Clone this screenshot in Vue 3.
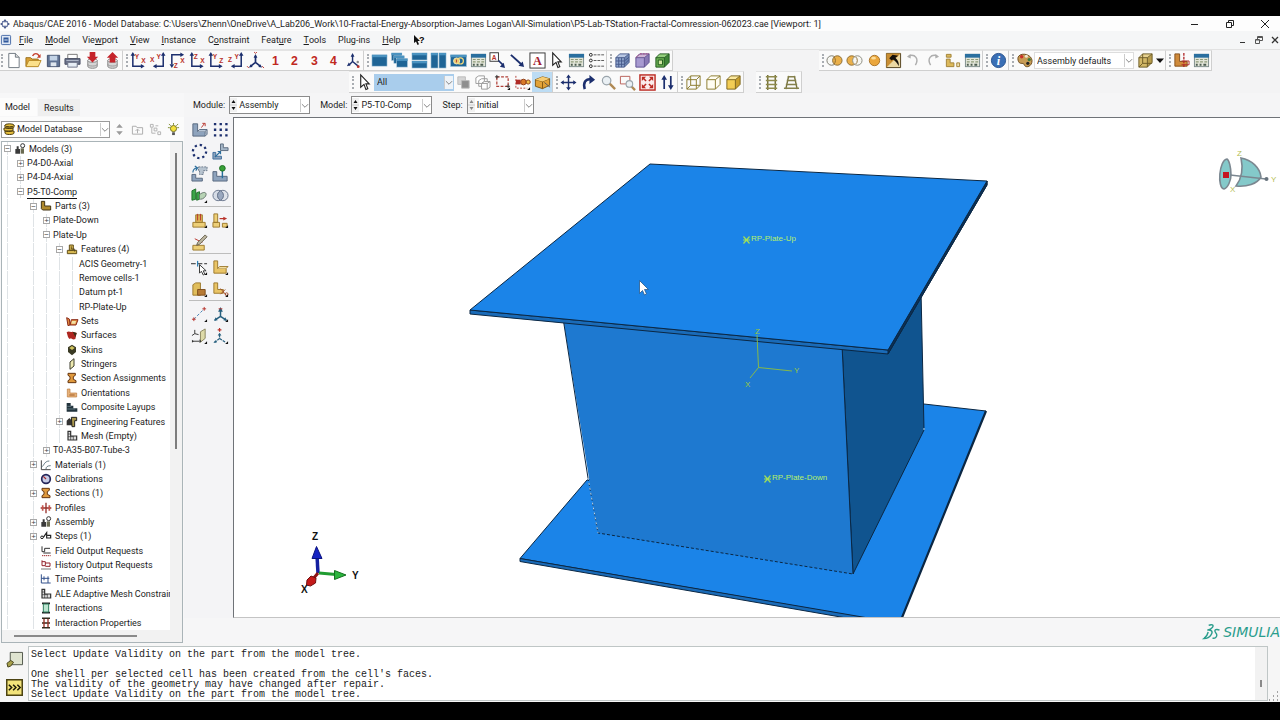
<script setup>
import { ref } from 'vue'

const navy = '#1c2f6e'
const letter = (x, y, t, c = '#b8322a') =>
  `<text x="${x}" y="${y}" font-size="7" font-weight="700" font-family="Liberation Sans, sans-serif" fill="${c}">${t}</text>`
const plane = (kind, a, b) => {
  if (kind === 'left')
    return `<path d="M3 3v12h10" fill="none" stroke="${navy}" stroke-width="1.6"/><path d="M3 0L.6 4h4.8zM15.500 15l-4-2.400v4.800z" fill="${navy}"/>${letter(5, 7, a)}${letter(12, 12, b)}`
  if (kind === 'right')
    return `<path d="M14 3v12H6" fill="none" stroke="${navy}" stroke-width="1.600"/><path d="M14 0l-2.400 4h4.800zM3 15l4-2.400v4.800z" fill="${navy}"/>${letter(7, 7, a)}${letter(0, 11, b)}`
  return `<path d="M3 13V3h10" fill="none" stroke="${navy}" stroke-width="1.600"/><path d="M3 17L.6 13h4.800zM16 3l-4-2.400v4.800z" fill="${navy}"/>${letter(5, 17, a)}${letter(12, 12, b)}`
}
const num = (n) =>
  `<text x="9" y="14" text-anchor="middle" font-size="13" font-weight="700" font-family="Liberation Sans, sans-serif" fill="#c0281e">${n}</text>`
const table =
  '<rect x="1.500" y="2.500" width="15" height="13" fill="#e3e6da" stroke="#7c8c8a"/><path d="M1 2h16v4H1z" fill="#2a6f9f"/><path d="M3 8h3M7.500 8h3M12 8h3M3 10.500h3M7.500 10.500h3M12 10.500h3" stroke="#8e9a78" stroke-width="1.200"/><path d="M3 13.500h2M7 13.500h2M11 13.500h3" stroke="#4c5c50" stroke-width="2"/>'
const cube = (f, t, s, l) =>
  `<path d="M2 6h9v10H2z" fill="${f}"/><path d="M2 6l4-4h10l-5 4z" fill="${t}"/><path d="M11 6l5-4v9l-5 5z" fill="${s}"/><path d="M2 6h9v10H2zM2 6l4-4h10l-5 4M16 2v9l-5 5" fill="none" stroke="${l}"/>`
const wedge = '<path d="M17 14v3h-3z" fill="#111"/>'
const partL = (f, s) => `<path d="M2 2h5v8h8v5H2z" fill="${f}" stroke="${s}"/>`
const screen = (x, y, w, h) =>
  `<rect x="${x}" y="${y}" width="${w}" height="${h}" fill="#1f6596" stroke="#b9d2e2" stroke-width=".6"/><path d="M${x} ${y}h${w}v2.500h-${w}z" fill="#4b93c0"/>`

const icons = {
  new: '<path d="M4 1.500h7l4 4v11H4z" fill="#fff" stroke="#6f7780"/><path d="M11 1.500v4h4" fill="#ddd" stroke="#6f7780"/>',
  open: '<path d="M1 6h5l1.500 1.500H14V15H1z" fill="#d9a035" stroke="#99701c"/><path d="M1 15.500L4 9h13l-3 6.500z" fill="#fbe08a" stroke="#b98b28"/><path d="M8 4c2-3 5-3 7 0" fill="none" stroke="#c43c2a" stroke-width="1.500"/><path d="M16.500 2v4h-4z" fill="#c43c2a"/>',
  save: '<path d="M2.500 3.500h13v12h-13z" fill="#5f7293" stroke="#42506c"/><path d="M5 4h8v5H5z" fill="#c3d3e6"/><path d="M6 11h6v4H6z" fill="#dfe6ee"/>',
  print: '<path d="M4 2.500h10V7H4z" fill="#fff" stroke="#777"/><path d="M1 7h16v6H1z" fill="#6a7189" stroke="#484e63"/><path d="M4 11h10v5H4z" fill="#e6edf5" stroke="#6d7488"/><path d="M2.500 9h13" stroke="#b3bacb"/>',
  dbdown: '<path d="M4 9v6c0 3 10 3 10 0V9z" fill="#d5d5d5" stroke="#888"/><ellipse cx="9" cy="9" rx="5" ry="2" fill="#f2f2f2" stroke="#888"/><path d="M6 0h6v5h3l-6 6-6-6h3z" fill="#c5242b"/><path d="M4 13c0 2.500 10 2.500 10 0" fill="none" stroke="#999"/>',
  dbup: '<path d="M4 9v6c0 3 10 3 10 0V9z" fill="#d5d5d5" stroke="#888"/><ellipse cx="9" cy="9" rx="5" ry="2" fill="#f2f2f2" stroke="#888"/><path d="M6 11h6V6h3L9 0 3 6h3z" fill="#c5242b"/><path d="M4 13c0 2.500 10 2.500 10 0" fill="none" stroke="#999"/>',
  xy: plane('left', 'Y', 'X'),
  yx: plane('right', 'Y', 'X'),
  zx: plane('down', 'Z', 'X'),
  xz: plane('left', 'Z', 'X'),
  yz: plane('left', 'Y', 'Z'),
  zy: plane('right', 'Y', 'Z'),
  iso: `<path d="M9 4v7L4 15M9 11l5 4" fill="none" stroke="${navy}" stroke-width="1.800"/><path d="M9 2L7 6h4zM2 16.500l4-.5-2-3zM16 16.500l-4-.5 2-3z" fill="${navy}"/><path d="M7.500 0L9 1.500 10.500 0M0 15l2 2M16 15l2 2" stroke="#b8322a" fill="none"/>`,
  n1: num(1), n2: num(2), n3: num(3), n4: num(4),
  triad: `<path d="M8 3v7l-4 4M8 10l6 5" fill="none" stroke="${navy}" stroke-width="1.500"/><path d="M8 1L6 5h4zM2 15l4-1-2-3z" fill="${navy}"/><circle cx="13.500" cy="10.500" r="1.300" fill="#888"/><circle cx="14" cy="15.500" r="1.500" fill="#b8322a"/>`,
  vp: screen(1, 3, 16, 12),
  cascade: screen(0.5, 1, 11, 8) + screen(3, 4, 11, 8) + screen(6, 7, 11.5, 9),
  tileh: screen(1, 1, 16, 7.5) + screen(1, 9.5, 16, 7.5),
  tilev: screen(1, 1, 7.5, 16) + screen(9.5, 1, 7.5, 16),
  rings: screen(0.5, 3, 17, 12.5) + '<circle cx="7" cy="9.500" r="3.200" fill="#e7c868" stroke="#f4e9bd"/><circle cx="11" cy="9.500" r="3.200" fill="none" stroke="#f4d97a" stroke-width="1.300"/><path d="M7 8v3" stroke="#a33"/>',
  table,
  note: `<rect x="1" y=".8" width="9" height="9" fill="#fff" stroke="#333"/>${letter(3, 8, 'A')}<path d="M10 9l5 5" stroke="${navy}" stroke-width="1.800"/><path d="M17 17l-5.500-1.500 4-4z" fill="${navy}"/>`,
  arrow: `<path d="M2 3l11 10" stroke="${navy}" stroke-width="2"/><path d="M16 16l-6-1.500 4.500-4.500z" fill="${navy}"/>`,
  text: '<rect x="1" y="1" width="16" height="16" fill="#fff" stroke="#333"/><text x="9" y="14" text-anchor="middle" font-size="13" font-weight="700" font-family="Liberation Serif, serif" fill="#a3202c">A</text>',
  cursor: '<path d="M5 1v13l3.500-3 2 5.500 2-1-2-5H14z" fill="#fff" stroke="#222" stroke-width="1.200"/>',
  list: '<g fill="none" stroke="#222"><circle cx="3" cy="3" r="1.500"/><circle cx="3" cy="9" r="1.500"/><circle cx="3" cy="15" r="1.500"/></g><path d="M6 3h11M6 9h11M6 15h11" stroke="#555" stroke-dasharray="3 1"/>',
  cubeA: cube('#8fa5cc', '#b9c8e3', '#6e86b4', '#46598a') + '<path d="M5 6v10M8 6v10M2 9.500h9l5-4M2 13h9l5-5" stroke="#46598a" fill="none"/>',
  cubeB: cube('#a79ad0', '#d0b5d5', '#8878b4', '#5d5190') + '<path d="M2 6l4-4h10" stroke="#a9457f" fill="none" stroke-dasharray="2 1"/>',
  cubeC: cube('#6aae52', '#93cf7c', '#3d8436', '#20591d') + '<path d="M4.500 8.500h4.500v5H4.500z" fill="#cfe5a0" stroke="#1d5a1a"/>',
  boolA: '<circle cx="6" cy="9" r="5" fill="#f7f7f3" stroke="#7a7a70"/><circle cx="12" cy="9" r="5" fill="#eab04a" stroke="#8a6a32"/><path d="M8 5a5 5 0 0 1 0 8" fill="none" stroke="#8a6a32"/>',
  boolB: '<circle cx="6" cy="9" r="5" fill="#eab04a" stroke="#8a6a32"/><circle cx="12" cy="9" r="5" fill="#f7f7f3" stroke="#8a8a80"/><path d="M10 5a5 5 0 0 1 0 8" fill="none" stroke="#8a6a32"/>',
  ball: '<circle cx="9" cy="9" r="5.500" fill="#eaa63c" stroke="#a8742a"/><ellipse cx="8" cy="6.500" rx="2.500" ry="1.500" fill="#fbdc9a"/>',
  pick: '<path d="M1.500 1.500h15v15h-15z" fill="#ecd9a4" stroke="#50401c"/><path d="M1.500 16.500V1.500h15z" fill="#c98e33"/><path d="M4.500 6.500L8 3l6 1-3 2c3 3 4 5 3.500 9C13 12 11 9.500 8.500 8L7 9z" fill="#15100a"/>',
  undo: '<path d="M4 4c7-2 11 3 7 10" fill="none" stroke="#aeaeae" stroke-width="1.500"/><path d="M2 5l4-3v5z" fill="#aeaeae"/>',
  redo: '<path d="M14 4C7 2 3 7 7 14" fill="none" stroke="#aeaeae" stroke-width="1.500"/><path d="M16 5l-4-3v5z" fill="#aeaeae"/>',
  swap: '<path d="M2.500 2.500h5v3h-5zM2.500 7.500h4v4h4v4h-8z" fill="#dcb95c" stroke="#a28339"/><path d="M13.500 11.500h3v4h-3z" fill="#eee0b0" stroke="#a28339"/>',
  info: '<circle cx="9" cy="9" r="7.500" fill="#3a6fb5" stroke="#25508c"/><text x="9" y="14" text-anchor="middle" font-size="13" font-style="italic" font-weight="700" font-family="Liberation Serif, serif" fill="#fff">i</text>',
  palette: '<path d="M2 7c0-7 14-6 15 2 0 7-7 8-8 5-.5-2-2-2-4-2-2 0-3-3-3-5z" fill="#c79b54" stroke="#6b4a1d"/><circle cx="6" cy="5" r="1.800" fill="#c9302a"/><circle cx="11" cy="4.500" r="1.600" fill="#efe7d0"/><circle cx="14" cy="8" r="1.700" fill="#3d7c3a"/><circle cx="12.500" cy="12" r="1.700" fill="#222"/>',
  cubeY: cube('#d2b867', '#e6d18f', '#b79c4c', '#6b5a25') + '<path d="M6 2v10h10M2 16l4-4" fill="none" stroke="#6b5a25"/>',
  down: '<path d="M1 6.500h8L5 11z" fill="#111"/>',
  section: partL('#cf8a3a', '#85501a') + '<path d="M11.500 1v16" stroke="#b02a2a" stroke-width="1.400" stroke-dasharray="3 1"/><path d="M9 9.500h8v4H9" fill="none" stroke="#b02a2a"/>',
  squares: '<path d="M3 3h8v8H3z" fill="#d5d5d5" stroke="#bbb"/><path d="M7 7h8v8H7z" fill="#8f8f8f" stroke="#bbb"/>',
  cubes: '<g fill="#fff" stroke="#999"><path d="M2 4l3-2h6v6l-3 2H2zM5 7l3-2h6v6l-3 2H5z"/><path d="M8 10l3-2h6v6l-3 2H8zM8 10h6v6M14 10l3-2"/></g>',
  rectsel: '<path d="M3 3h12v10H3z" fill="none" stroke="#b04038" stroke-width="1.300" stroke-dasharray="3 1.500"/><path d="M1 3h4M3 1v4M13 13h4M15 11v4" stroke="#333"/>' + wedge,
  filter: '<path d="M2 2v13h12" fill="none" stroke="#b04038" stroke-dasharray="2 1.500"/><path d="M2 6h5v5H2z" fill="#b02a25"/><circle cx="10" cy="8.500" r="3" fill="#d9792a" stroke="#8c3a14"/><circle cx="15" cy="8.500" r="2.200" fill="#f0c04a" stroke="#8c3a14"/>' + wedge,
  box: '<path d="M1.500 6L9 3l7.500 2v7L9 15.500 1.500 13z" fill="#e2a238" stroke="#7f5713"/><path d="M1.500 6L9 8l7.500-3M9 8v7.500" fill="none" stroke="#7f5713"/><path d="M1.500 6L9 3l7.500 2L9 8z" fill="#f6cc74"/><path d="M11 9l6 5" stroke="#555"/>',
  move: `<path d="M9 3v12M3 9h12" stroke="${navy}" stroke-width="1.500"/><path d="M9 .5L6.500 4h5zM9 17.500L6.500 14h5zM.5 9L4 6.500v5zM17.500 9L14 6.500v5z" fill="${navy}"/>`,
  rotate: `<path d="M5 16C3 9 6 5 11 5.500" fill="none" stroke="${navy}" stroke-width="2.600"/><path d="M16 6l-6-5v9.500z" fill="${navy}"/>`,
  zoom: '<path d="M10 10l6 6" stroke="#b08a54" stroke-width="2.500"/><circle cx="7" cy="7" r="4.500" fill="#eaf0f4" stroke="#9aa4ab" stroke-width="1.300"/>',
  zoombox: '<path d="M1.500 2.500h10v8h-10z" fill="none" stroke="#b86058"/><path d="M13 13l4 4" stroke="#b08a54" stroke-width="2.500"/><circle cx="11" cy="10.500" r="3.500" fill="#eaf0f4" stroke="#9aa4ab" stroke-width="1.200"/>',
  fit: '<rect x="1" y="1" width="16" height="16" fill="#fbeceb" stroke="#bb2a22" stroke-width="1.500"/><path d="M3 3h4.500L3 7.500zM15 3v4.500L10.500 3zM3 15v-4.500L7.500 15zM15 15h-4.500l4.500-4.500z" fill="#bb2a22"/><path d="M4 4l3.500 3.500M14 4l-3.500 3.500M4 14l3.500-3.500M14 14l-3.500-3.500" stroke="#bb2a22" stroke-width="1.600"/>',
  updown: `<path d="M5.500 4v12M12.500 2v12" stroke="${navy}" stroke-width="1.800"/><path d="M5.500 1L2.500 6h6zM12.500 17l-3-5h6z" fill="${navy}"/>`,
  wire: '<g fill="none" stroke="#8a7a2c"><path d="M2 6h10v10H2zM6 2h10v10H6zM2 6l4-4M12 6l4-4M2 16l4-4M12 16l4-4"/></g>',
  hidden: cube('#fffdf2', '#fffdf2', '#fffdf2', '#8a7a2c'),
  shaded: cube('#f3cd55', '#fbe89c', '#caa02c', '#7d651b'),
  ladder: '<path d="M5 1v16M13 1v16" stroke="#77733c" stroke-width="1.600"/><path d="M3 3h12M3 7h12M3 11h12M3 15h12" stroke="#8f8b4d" stroke-width="1.600"/>',
  ladder2: '<path d="M6 2L3 16M12 2l3 14" stroke="#77733c" stroke-width="1.500"/><path d="M5 3h8M4 7h10M3 11h12M1 15h16" stroke="#85814c" stroke-width="1.600"/>',

  inst: '<path d="M2 3h5v8h8v5H2z" fill="#8ea3bd" stroke="#56677e"/><path d="M7 11l2-2h8l-2 2M17 9v5l-2 2" fill="#b9c7d8" stroke="#56677e"/><path d="M11 7l3-4M12 2.500h3v3" stroke="#b8322a" fill="none"/>',
  grid: `<g fill="${navy}"><path d="M2 2h2.500v2.500H2zM8 2h2.500v2.500H8zM14 2h2.500v2.500H14zM2 8h2.500v2.500H2zM8 8h2.500v2.500H8zM14 8h2.500v2.500H14zM2 14h2.500v2.500H2zM8 14h2.500v2.500H8zM14 14h2.500v2.500H14z"/></g>`,
  radial: `<circle cx="9" cy="9" r="7" fill="none" stroke="${navy}" stroke-width="2.400" stroke-dasharray="2.400 3.100"/>`,
  trans: '<path d="M9 1h3v4h5v3H9z" fill="#a5b6c8" stroke="#5a6b80"/><path d="M1 10h3v4h6v3H1z" fill="#8ea3bd" stroke="#3e6d9c"/><path d="M3 15l6-6M6 9h3v3" fill="none" stroke="#2b6d9c" stroke-width="1.300"/>',
  rot: '<path d="M8 2h9v4h-4v4H9V6H8z" fill="#b7c3cf" stroke="#69788a" stroke-dasharray="2 1"/><path d="M1 10h4v4h7v3H1z" fill="#8ea3bd" stroke="#56677e"/><path d="M2 8c0-3 1-4 4-5M4 1l3 2-2 3" fill="none" stroke="#2b6d9c" stroke-width="1.200"/>',
  pin: '<path d="M1 7h4v5h11v5H1z" fill="#8ea3bd" stroke="#56677e"/><path d="M11 6v8" stroke="#256d9a" stroke-width="1.500"/><circle cx="11" cy="3.500" r="3" fill="#38a038" stroke="#1d6c22"/>',
  align: '<path d="M1 4l4-2v11l-4 1zM6 6l3-1v8l-3 1z" fill="#3aa548" stroke="#1f6e2b"/><path d="M9 12v-4c4-3 7-3 7 0 0 2-3 5-6 5z" fill="#b7d3b5" stroke="#65766c"/>' + wedge,
  merge: '<circle cx="6.500" cy="9" r="5.500" fill="#d6dce6" stroke="#68758c"/><circle cx="11.500" cy="9" r="5.500" fill="#d6dce6" fill-opacity=".7" stroke="#68758c"/><path d="M9 4a5.500 5.500 0 0 1 0 10 5.500 5.500 0 0 1 0-10z" fill="#9aa8bf" stroke="#68758c"/>',
  extrude: '<path d="M2 11h13v5H2z" fill="#edcf78" stroke="#9b782c"/><path d="M5 3h7v8H5z" fill="#dcb557" stroke="#9b782c"/><path d="M7 9V2M10 9V2" stroke="#b8322a"/>' + wedge,
  shell: '<path d="M2 2h4v9H2zM1 11h7v5H1zM11 12h5v4h-5z" fill="#edcf78" stroke="#9b782c"/><path d="M8 7h6" stroke="#b8322a" stroke-width="1.300"/><path d="M16 7l-4-2v4z" fill="#b8322a"/>' + wedge,
  sketch: '<path d="M2 12h12v5H2z" fill="#edcf78" stroke="#9b782c"/><path d="M4 5l8 4" stroke="#b8322a"/><path d="M15 1l2 2-8 8-3 1 1-3z" fill="#bdb6a0" stroke="#66604c"/>',
  part1: '<path d="M0 5h17" stroke="#222" stroke-dasharray="5 2"/><path d="M7 2v6" stroke="#2a7eb4" stroke-width="1.300"/><path d="M9 6v9l2-2 2 4 1.500-1-1.500-3.500h3z" fill="#fff" stroke="#333"/>' + wedge,
  part2: '<path d="M2 2h4v8h9v5H2z" fill="#e9c466" stroke="#9b782c"/><path d="M6 10l2-2h9l-2 2" fill="#f6e1a4" stroke="#9b782c"/>' + wedge,
  part3: '<path d="M2 4l3-2h5v13H2z" fill="#e0bd5b" stroke="#9b782c"/><path d="M7 9h8v6H7z" fill="#b67a35" stroke="#7d4c1b"/>' + wedge,
  part4: '<path d="M2 2h4v7h6v4H2z" fill="#e9c466" stroke="#9b782c"/><path d="M9 8l6 7M14 9l-5 5" stroke="#a04a2a"/><circle cx="15.500" cy="14" r="1.500" fill="none" stroke="#a04a2a"/>' + wedge,
  dline: '<path d="M3 14L14 3" stroke="#3f7cae" stroke-dasharray="3 2"/><path d="M1 14h4M3 12v4M12 3h4M14 1v4" stroke="#b8322a"/>' + wedge,
  daxis: '<path d="M9 3v8l-6 4M9 11l6 4" fill="none" stroke="#27607f" stroke-width="1.600"/><path d="M9 1L6.500 6h5zM2 15.500l4-.5-2-3zM16 15.500l-4-.5 2-3z" fill="#27607f"/><path d="M7 3h4" stroke="#b8322a"/>' + wedge,
  dplane: '<path d="M4 2v4l-3 2M4 6l4 1M2 14h7" fill="none" stroke="#333"/><path d="M10 4l5-3v10l-5 4z" fill="#dedaa8" stroke="#88845c"/><path d="M9 12l2 2-2 2zM1 12.500v3l2-1.500z" fill="#333"/>' + wedge,
  dcsys: '<path d="M8 7v4l-5 4M8 11l6 4" fill="none" stroke="#27607f" stroke-width="1.300" stroke-dasharray="3 1"/><path d="M6 2h4M8 0v4" stroke="#b8322a" stroke-width="1.300"/><path d="M6 8h4L8 5zM1.500 16l4-1-2-2z" fill="#27607f"/>' + wedge,

  models: '<path d="M2 9h2V5h3v4h2v7H2z" fill="#3a3a3a"/><path d="M10 16V8h5v8z" fill="#6b6b52"/><circle cx="13" cy="4" r="3" fill="none" stroke="#333" stroke-width="1.500"/>',
  parts: '<path d="M2 2h5v7h9v6H4l-2-2z" fill="#b08a2c" stroke="#423312" stroke-width="1.500"/>',
  features: '<path d="M2 11h14v5H2zM5 3h6v8H5z" fill="#d6b751" stroke="#63511c" stroke-width="1.500"/><path d="M8 5v4h5v4" fill="none" stroke="#3e3110"/>',
  sets: '<path d="M1 4l4 2 1 9-3 1zM6 15l2-8h10l-3 8z" fill="#e28a3c" stroke="#8b2c1b" stroke-width="1.500"/><path d="M9 9h6l-1 4H8z" fill="#f3e2a4"/>',
  surfaces: '<path d="M1 5c4-3 5 1 9-1l6 2-2 9c-5 2-5-2-9 0L3 12z" fill="#ad2620"/><path d="M10 4l6 2-2 6z" fill="#3b2f16"/>',
  skins: '<path d="M9 1l6 4v7l-6 5-6-5V5z" fill="#3a3a24"/><path d="M9 3l4 3-4 3-4-3z" fill="#cfc35c"/>',
  stringers: '<path d="M6 6l6-5v11l-6 5z" fill="#eeeab0" stroke="#3c3c2c" stroke-width="1.500"/>',
  sections: '<path d="M3 2h11v3l-3 2v4l4 2v3H3v-3l3-2V7L3 5z" fill="#e09a3e" stroke="#663510" stroke-width="1.500"/>',
  orient: '<path d="M2 3h4v6h10v6H2z" fill="#e6b27a" stroke="#bd7a3c"/><path d="M5 12h8" stroke="#a35c27" stroke-width="1.500"/>',
  layups: '<path d="M1 3h6v4h4v4h6v5H1z" fill="#22333c"/><path d="M2 8h6M2 12h12" stroke="#7c9aa5"/>',
  eng: '<path d="M1 14V7l4-4 4 4v7z" fill="#333"/><path d="M8 2h8v5h-3v9H9z" fill="#a9964c" stroke="#222" stroke-width="1.500"/>',
  mesh: '<path d="M3 2h4v7h9v6H3z" fill="#ddd" stroke="#333" stroke-width="1.800"/><path d="M3 6h4M3 10h8M7 9v6M11 9v6" stroke="#333"/>',
  materials: '<path d="M2 2v14h14" fill="none" stroke="#444" stroke-width="1.500"/><path d="M2 12c4-1 4-9 12-9M9 15c0-3 2-5 7-5" fill="none" stroke="#3d5a66" stroke-width="1.200"/>',
  calib: '<circle cx="9" cy="9" r="6.500" fill="#c7cce6" stroke="#24265a" stroke-width="2.500"/><path d="M9 9L5 5" stroke="#a52a2a" stroke-width="1.800"/>',
  profiles: '<path d="M9 1v16M1 9h16" stroke="#962f2a" stroke-width="2"/><path d="M4 5v8M14 5v8" stroke="#c4554d" stroke-width="2.500"/>',
  steps: '<circle cx="3" cy="11" r="2" fill="none" stroke="#222" stroke-width="1.500"/><path d="M5 11l5-7v8h6V8h-5" fill="none" stroke="#222" stroke-width="1.800"/>',
  field: '<path d="M3 2v8h4V5h8M5 12h11" fill="none" stroke="#333" stroke-width="1.500"/><path d="M3 16h13" stroke="#9e2b2b" stroke-width="1.500" stroke-dasharray="2 1"/>',
  history: '<path d="M3 2v8h5V4H3M8 6h7v5H8" fill="none" stroke="#93232d" stroke-width="1.500"/><path d="M2 15h14" stroke="#333" stroke-width="1.500" stroke-dasharray="2 1"/>',
  time: '<path d="M2 2v13h14M2 8h12" fill="none" stroke="#33518b" stroke-width="1.500"/><path d="M6 5v6M12 5v10" stroke="#33518b" stroke-width="1.500"/>',
  inter: '<path d="M3 2h12M3 16h12" stroke="#222" stroke-width="2.500"/><path d="M5 3h8v12H5z" fill="#bce5d0" stroke="#2d7d5c" stroke-width="1.500"/>',
  interp: '<path d="M3 2h12M3 9h12M3 16h12" stroke="#352a1d" stroke-width="2.200"/><path d="M6 3v12M12 3v12" stroke="#9b2d22" stroke-width="2"/>',
}

const menus = [
  ['', 'F', 'ile'], ['', 'M', 'odel'], ['Vie', 'w', 'port'], ['', 'V', 'iew'], ['', 'I', 'nstance'],
  ['C', 'o', 'nstraint'], ['Feat', 'u', 're'], ['', 'T', 'ools'], ['Plu', 'g', '-ins'], ['', 'H', 'elp'],
]

const row1 = [
  { cls: 'w118', items: ['new', 'open', 'save', 'print', 'dbdown', 'dbup'] },
  { cls: 'w234', items: ['xy', 'yx', 'zx', 'xz', 'yz', 'zy', 'iso', 'n1', 'n2', 'n3', 'n4', 'triad'] },
  { cls: 'w236', items: ['vp', 'cascade', 'tileh', 'tilev', 'rings', 'table', 'note', 'arrow', 'text', 'cursor', 'table', 'list'] },
  { cls: 'w59', items: ['cubeA', 'cubeB', 'cubeC'] },
]
const displayTools = ['boolA', 'boolB', 'ball', 'pick', 'undo', 'redo', 'swap', 'table']
const selectTools = ['cubes', 'rectsel', 'filter', 'box']
const viewTools = ['move', 'rotate', 'zoom', 'zoombox', 'fit', 'updown']
const renderTools = ['wire', 'hidden', 'shaded']

const toolbox = [
  ['inst', 'grid', 'radial', 'trans', 'rot', 'pin', 'align', 'merge'],
  ['extrude', 'shell', 'sketch'],
  ['part1', 'part2', 'part3', 'part4'],
  ['dline', 'daxis', 'dplane', 'dcsys'],
]

const tree = [
  [0, '-', 'models', 'Models (3)'],
  [1, '+', '', 'P4-D0-Axial'],
  [1, '+', '', 'P4-D4-Axial'],
  [1, '-', '', 'P5-T0-Comp'],
  [2, '-', 'parts', 'Parts (3)'],
  [3, '+', '', 'Plate-Down'],
  [3, '-', '', 'Plate-Up'],
  [4, '-', 'features', 'Features (4)'],
  [5, '', '', 'ACIS Geometry-1'],
  [5, '', '', 'Remove cells-1'],
  [5, '', '', 'Datum pt-1'],
  [5, '', '', 'RP-Plate-Up'],
  [4, '', 'sets', 'Sets'],
  [4, '', 'surfaces', 'Surfaces'],
  [4, '', 'skins', 'Skins'],
  [4, '', 'stringers', 'Stringers'],
  [4, '', 'sections', 'Section Assignments'],
  [4, '', 'orient', 'Orientations'],
  [4, '', 'layups', 'Composite Layups'],
  [4, '+', 'eng', 'Engineering Features'],
  [4, '', 'mesh', 'Mesh (Empty)'],
  [3, '+', '', 'T0-A35-B07-Tube-3'],
  [2, '+', 'materials', 'Materials (1)'],
  [2, '', 'calib', 'Calibrations'],
  [2, '+', 'sections', 'Sections (1)'],
  [2, '', 'profiles', 'Profiles'],
  [2, '+', 'models', 'Assembly'],
  [2, '+', 'steps', 'Steps (1)'],
  [2, '', 'field', 'Field Output Requests'],
  [2, '', 'history', 'History Output Requests'],
  [2, '', 'time', 'Time Points'],
  [2, '', 'mesh', 'ALE Adaptive Mesh Constraints'],
  [2, '', 'inter', 'Interactions'],
  [2, '', 'interp', 'Interaction Properties'],
]

const contexts = [
  { id: 'module', label: 'Module:', value: 'Assembly', active: true },
  { id: 'model', label: 'Model:', value: 'P5-T0-Comp', active: true },
  { id: 'step', label: 'Step:', value: 'Initial', active: false },
]

const messages = ref([
  'Select Update Validity on the part from the model tree.',
  '\u00a0',
  "One shell per selected cell has been created from the cell's faces.",
  'The validity of the geometry may have changed after repair.',
  'Select Update Validity on the part from the model tree.',
])
</script>

<template>
  <div class="screen">
    <div class="window">
      <header class="title">
        <svg class="logo" viewBox="0 0 12 12"><path d="M6 0l3 4H3zM6 12l3-4H3zM0 6l3-2v4zM12 6L9 4v4z" fill="#4a5a8a" /><rect x="3" y="3" width="6" height="6" fill="none" stroke="#6b7aa5" /></svg>
        <h1>Abaqus/CAE 2016 - Model Database: C:\Users\Zhenn\OneDrive\A_Lab206_Work\10-Fractal-Energy-Absorption-James Logan\All-Simulation\P5-Lab-TStation-Fractal-Comression-062023.cae [Viewport: 1]</h1>
        <div class="winctl">
          <button aria-label="Minimize"><svg viewBox="0 0 10 10"><path d="M1 5.500h7" stroke="#222" /></svg></button>
          <button aria-label="Restore"><svg viewBox="0 0 10 10"><path d="M1.500 3.500h5v5h-5zM3.500 3V1.500h5v5H7" fill="none" stroke="#222" /></svg></button>
          <button aria-label="Close"><svg viewBox="0 0 10 10"><path d="M1 1l8 8M9 1L1 9" stroke="#222" /></svg></button>
        </div>
      </header>

      <nav class="menu">
        <svg class="docicon" viewBox="0 0 12 12"><rect x=".5" y=".5" width="11" height="11" rx="1" fill="#dfe8f5" stroke="#31599c" /><rect x="3" y="3" width="6" height="6" fill="#31599c" /><path d="M4 6h4" stroke="#fff" /></svg>
        <button v-for="m in menus" :key="m[2]">{{ m[0] }}<u>{{ m[1] }}</u>{{ m[2] }}</button>
        <button class="whats" aria-label="Context help"><svg viewBox="0 0 12 12"><path d="M1 1v8l2-1.500L4.500 11 6 10.300 4.600 7H7z" fill="#111" /><text x="6" y="9" font-size="9" font-weight="700" font-family="Liberation Sans, sans-serif">?</text></svg></button>
        <div class="mdi">
          <button aria-label="Minimize document"><svg viewBox="0 0 8 8"><path d="M1 6.500h5" stroke="#333" /></svg></button>
          <button aria-label="Restore document"><svg viewBox="0 0 8 8"><path d="M.5 3.500h4v4h-4zM2.500 3V.5h5v4H5M1 4h3M3 1.500h4" fill="none" stroke="#555" /></svg></button>
          <button aria-label="Close document"><svg viewBox="0 0 8 8"><path d="M1 1l6 6M7 1L1 7" stroke="#333" stroke-width="1.300" /></svg></button>
        </div>
      </nav>

      <div class="bar">
        <div v-for="(g, i) in row1" :key="i" class="group">
          <span class="grip"></span>
          <div class="tools" :class="g.cls">
            <button v-for="(n, k) in g.items" :key="k" :aria-label="n"><svg viewBox="0 0 18 18" v-html="icons[n]"></svg></button>
          </div>
        </div>
        <div class="group far">
          <span class="grip"></span>
          <div class="tools w157">
            <button v-for="n in displayTools" :key="n" :aria-label="n"><svg viewBox="0 0 18 18" v-html="icons[n]"></svg></button>
          </div>
        </div>
        <div class="group">
          <span class="grip"></span>
          <div class="tools w19"><button aria-label="Query"><svg viewBox="0 0 18 18" v-html="icons.info"></svg></button></div>
        </div>
        <div class="group">
          <span class="grip"></span>
          <div class="tools w19"><button aria-label="Color code"><svg viewBox="0 0 18 18" v-html="icons.palette"></svg></button></div>
          <div class="pick colors">
            <select aria-label="Color mapping"><option>Assembly defaults</option></select>
            <svg class="chev" viewBox="0 0 9 9"><path d="M1 3l3.500 3.500L8 3" /></svg>
          </div>
          <div class="tools w19"><button aria-label="Translucency"><svg viewBox="0 0 18 18" v-html="icons.cubeY"></svg></button></div>
          <button class="drop" aria-label="Translucency options"><svg viewBox="0 0 10 18" v-html="icons.down"></svg></button>
        </div>
        <div class="group">
          <span class="grip"></span>
          <div class="tools w39">
            <button aria-label="View cut"><svg viewBox="0 0 18 18" v-html="icons.section"></svg></button>
            <button aria-label="View cut manager"><svg viewBox="0 0 18 18" v-html="icons.table"></svg></button>
          </div>
        </div>
      </div>

      <div class="bar second">
        <div class="group">
          <span class="grip"></span>
          <div class="tools w19"><button aria-label="Select"><svg viewBox="0 0 18 18" v-html="icons.cursor"></svg></button></div>
          <div class="pick filter">
            <select aria-label="Selection filter"><option>All</option></select>
            <svg class="chev" viewBox="0 0 9 9"><path d="M1 3l3.500 3.500L8 3" /></svg>
          </div>
          <div class="tools w19"><button aria-label="Selection options"><svg viewBox="0 0 18 18" v-html="icons.squares"></svg></button></div>
          <div class="tools w78">
            <button v-for="n in selectTools" :key="n" :aria-label="n" :class="{ on: n === 'box' }"><svg viewBox="0 0 18 18" v-html="icons[n]"></svg></button>
          </div>
        </div>
        <div class="group">
          <span class="grip"></span>
          <div class="tools w118">
            <button v-for="n in viewTools" :key="n" :aria-label="n"><svg viewBox="0 0 18 18" v-html="icons[n]"></svg></button>
          </div>
        </div>
        <div class="group">
          <span class="grip"></span>
          <div class="tools w59">
            <button v-for="n in renderTools" :key="n" :aria-label="n"><svg viewBox="0 0 18 18" v-html="icons[n]"></svg></button>
          </div>
        </div>
        <div class="group near">
          <span class="grip"></span>
          <div class="tools w39">
            <button aria-label="Parallel"><svg viewBox="0 0 18 18" v-html="icons.ladder"></svg></button>
            <button aria-label="Perspective"><svg viewBox="0 0 18 18" v-html="icons.ladder2"></svg></button>
          </div>
        </div>
      </div>

      <div class="main">
        <aside class="side">
          <div class="tabs" role="tablist">
            <button role="tab" aria-selected="true" class="cur">Model</button>
            <button role="tab" aria-selected="false">Results</button>
          </div>
          <div class="dbrow">
            <div class="pick db">
              <svg class="dbicon" viewBox="0 0 12 12"><g fill="#e5be3c" stroke="#4c3c10"><path d="M2 8v2c0 2 9 2 9 0V8zM1 5v2c0 2 9 2 9 0V5zM2 2v2c0 2 9 2 9 0V2z" /><ellipse cx="6.500" cy="2.300" rx="4.500" ry="1.500" /></g></svg>
              <select aria-label="Database"><option>Model Database</option></select>
              <svg class="chev" viewBox="0 0 9 9"><path d="M1 3l3.500 3.500L8 3" /></svg>
            </div>
            <div class="dbtools">
              <button aria-label="Filter"><svg viewBox="0 0 14 14"><path d="M7 1l3.500 4h-7zM7 13l3.500-4h-7z" fill="#9b9b9b" /></svg></button>
              <button aria-label="Folder up"><svg viewBox="0 0 14 14"><path d="M1.500 3.500h4l1 1.500h6v7h-11zM7 11V7M5 8.500L7 6.500l2 2" fill="none" stroke="#aaa" /></svg></button>
              <button aria-label="Link"><svg viewBox="0 0 14 14"><path d="M1.500 1.500h3v3h-3zM5.500 5.500h3v3h-3zM9.500 9.500h3v3h-3zM3 5v6h4M10 3H7" fill="none" stroke="#b0b0b0" /></svg></button>
              <button aria-label="Hints"><svg viewBox="0 0 14 14"><circle cx="7" cy="6" r="3.300" fill="#f3e03c" stroke="#6d6a1c" /><path d="M5.500 10h3v3h-3z" fill="#555" /><path d="M7 0v2M1 5h2M11 5h2M2 1l2 2M12 1l-2 2" stroke="#7d8a2c" /></svg></button>
            </div>
          </div>
          <div class="tree">
            <div class="treebody">
              <ul>
                <li v-for="r in tree" :key="r[3]">
                  <span v-for="d in r[0]" :key="d" class="slot" :class="{ line: d !== 2 }"></span>
                  <span class="slot line own"><i v-if="r[1]" class="exp">{{ r[1] === '-' ? '−' : '+' }}</i></span>
                  <svg v-if="r[2]" class="ti" viewBox="0 0 18 18" v-html="icons[r[2]]"></svg>
                  <span class="lbl" :class="{ under: r[3] === 'P5-T0-Comp' }">{{ r[3] }}</span>
                </li>
              </ul>
              <div class="vscroll"><span></span></div>
            </div>
            <div class="hscroll"><span></span></div>
          </div>
        </aside>

        <section class="work">
          <div class="context">
            <div v-for="c in contexts" :key="c.id" class="field">
              <label :for="c.id">{{ c.label }}</label>
              <div class="pick" :class="c.id">
                <svg class="spin" viewBox="0 0 7 14"><path d="M0 0h7v14H0z" fill="#f1f1f1" /><path d="M1.500 5L3.500 2l2 3zM1.500 9l2 3 2-3z" :class="{ hot: c.active }" /><path d="M0 7h7" stroke="#ccc" /></svg>
                <select :id="c.id"><option>{{ c.value }}</option></select>
                <svg class="chev" viewBox="0 0 9 9"><path d="M1 3l3.500 3.500L8 3" /></svg>
              </div>
            </div>
          </div>
          <div class="stage">
            <div class="toolbox">
              <div v-for="(g, i) in toolbox" :key="i" class="set">
                <button v-for="n in g" :key="n" :aria-label="n"><svg viewBox="0 0 18 18" v-html="icons[n]"></svg></button>
              </div>
            </div>
            <div class="canvas">
              <svg viewBox="234 118 1046 499" preserveAspectRatio="xMidYMid slice">
                <g stroke="#0b2743" stroke-linejoin="round">
                  <path d="M587 480L520 558.500 876 620H901L986 411 924 404z" fill="#1b84e8" />
                  <path d="M520 558.500v3L858 620h22z" fill="#1a6bb8" />
                  <path d="M901 620L986 411" stroke-width="2.200" />
                  <path d="M842 345L921 290 924 430 853 574z" fill="#10548f" />
                  <path d="M563 318L842 345 853 574 598 533z" fill="#1e79d0" stroke="none" />
                  <path d="M842 345L853 574M563 318L588 478" fill="none" />
                  <path d="M588 478l10 55 255 41" fill="none" stroke-dasharray="3 2" />
                  <path d="M588 478l10 55M924 430v-4" fill="none" stroke="#b9dcfa" stroke-dasharray="2 3" />
                  <path d="M470 310v4L888 354 987 185v-4L888 350z" fill="#1a6bb8" />
                  <path d="M888 350v4L987 185v-4z" fill="#0c3157" />
                  <path d="M650 164L987 181 888 350 470 310z" fill="#1b84e8" />
                </g>
                <g fill="none" stroke="#86b94a">
                  <path d="M757 335L758.500 367.500 792 371M758.500 367.500L750 378" />
                </g>
                <g fill="none" stroke="#9fe05a" stroke-width="1.200">
                  <path d="M743.500 236.500l6 7M749.500 236.500l-6 7M743 240h7M764.500 475.500l6 7M770.500 475.500l-6 7M764 479h7" />
                </g>
                <g class="tag">
                  <text x="751" y="241">RP-Plate-Up</text>
                  <text x="772" y="480">RP-Plate-Down</text>
                </g>
                <g class="axis">
                  <text x="755" y="334">Z</text>
                  <text x="794" y="373">Y</text>
                  <text x="745" y="387">X</text>
                </g>
                <path d="M639.500 280.500v13l3-3 2 4.500 2-1-2-4.500h4z" fill="#fff" stroke="#27598c" stroke-width=".8" />

                <path d="M318 573L317 556" stroke="#1420a0" stroke-width="3.500" />
                <path d="M316.500 546.500L312 558.500h10z" fill="#1624c4" stroke="#0c1480" />
                <path d="M319 573L336 574.500" stroke="#1f9c30" stroke-width="3" />
                <path d="M346 575L334.500 570.500v9z" fill="#2ab53c" stroke="#13701f" />
                <path d="M318 573L313 579" stroke="#8c1414" stroke-width="3" />
                <path d="M307 580l4-4 5 2-.5 5-5 3-4-1z" fill="#c41a1a" stroke="#701010" />
                <g class="triad">
                  <text x="312" y="540">Z</text>
                  <text x="352" y="579">Y</text>
                  <text x="301" y="593">X</text>
                </g>

                <g fill="#84c9ca" stroke="#7b8790" stroke-width="1.600">
                  <path d="M1227 159C1219 160 1217 188 1224 189 1228 188 1231 180 1231 175 1231 167 1229 160 1227 159z" />
                  <path d="M1241 158C1252 160 1260 168 1261 177 1257 184 1247 187 1236 186 1242 178 1243 167 1241 158z" />
                </g>
                <path d="M1230 175L1266 179" stroke="#7b8790" stroke-width="1.600" />
                <circle cx="1266.500" cy="179" r="2" fill="#66727c" />
                <rect x="1223" y="172" width="6" height="6" fill="#c41420" />
                <g class="compass">
                  <text x="1237" y="156">Z</text>
                  <text x="1271" y="182">Y</text>
                  <text x="1230" y="192">X</text>
                </g>
              </svg>
            </div>
          </div>
          <div class="prompt">
            <svg class="ds" viewBox="0 0 18 17"><path d="M6 1.500C9 0 12 1 10 3.500 9 5 7 6 4.500 6.500M4.500 6.500C9 6 11 8 8.500 11.500 7 14 4 15.500 1 15.500 3 14 5 11 5.500 8.500M17.500 6.500c-3-1.500-6-.5-4.500 2l1.500 2.500c1 3-2 4.500-4.500 4" fill="none" stroke="#2a9d8c" stroke-width="1.500" /></svg>
            <span>SIMULIA</span>
          </div>
        </section>
      </div>

      <footer class="msg">
        <div class="msgbtns">
          <button aria-label="Message area"><svg viewBox="0 0 18 18"><path d="M4.500 1.500h13v13h-13z" fill="#dfe4d0" stroke="#4e5448" /><path d="M1 13l4-3 3 2-3 4-3 1z" fill="#a7a04a" stroke="#44421c" /></svg></button>
          <button class="cli" aria-label="Command line interface"><svg viewBox="0 0 18 18"><rect x=".8" y=".8" width="16.400" height="16.400" fill="#f2e37a" stroke="#4c4412" stroke-width="1.600" /><path d="M3 6l3 3-3 3M7.500 6l3 3-3 3M12 6l3 3-3 3" fill="none" stroke="#1c1a08" stroke-width="1.600" /></svg></button>
        </div>
        <div class="log">
          <div class="lines"><p v-for="(m, i) in messages" :key="i">{{ m }}</p></div>
          <div class="logscroll"><span></span></div>
        </div>
        <svg class="resize" viewBox="0 0 12 12"><path d="M9 3h1M5 7h1M9 7h1M1 11h1M5 11h1M9 11h1" stroke="#888" stroke-width="1.500" /></svg>
      </footer>
    </div>
  </div>
</template>

<style>
html, body { margin: 0; background: #000; }
</style>

<style scoped>
* { box-sizing: border-box; }
.screen {
  min-height: 100vh; padding: 16px 0 18px; background: #000; display: flex; flex-direction: column;
  font-family: Roboto, "Open Sans", sans-serif; font-size: 9px; color: #1c1c1c; overflow: hidden;
}
.window { flex: 1; display: flex; flex-direction: column; background: #f3f3f4; min-height: 0; }
button { border: 0; padding: 0; margin: 0; background: none; font: inherit; color: inherit; display: flex; align-items: center; justify-content: center; }
select { appearance: none; border: 0; margin: 0; padding: 0 0 0 2px; background: none; font: inherit; color: inherit; flex: 1; min-width: 0; height: 100%; }
svg { display: block; overflow: visible; }
h1, p, ul { margin: 0; padding: 0; font: inherit; }

.title { height: 15px; background: #fdfdfd; display: flex; align-items: center; }
.logo { width: 10px; height: 10px; margin-right: 3px; }
.title h1 { flex: 1; white-space: nowrap; overflow: hidden; }
.winctl { display: flex; gap: 25px; margin-right: 10px; }
.winctl svg { width: 10px; height: 10px; }

.menu { height: 19px; display: flex; align-items: center; background: #f5f6f7; gap: 12px; border-bottom: 1px solid #e2e2e2; }
.docicon { width: 10px; height: 10px; margin: 0 -4px 0 1px; }
.whats svg { width: 12px; height: 12px; }
.mdi { margin-left: auto; display: flex; gap: 8px; margin-right: 1px; }
.mdi svg { width: 8px; height: 8px; }

.bar { display: flex; height: 21px; }
.second { padding-left: 349px; height: 22px; }
.group { display: flex; align-items: center; background: #fafafa; border-right: 1px solid #cfcfcf; border-bottom: 1px solid #cfcfcf; border-top: 1px solid #e4e4e4; }
.group:first-child .grip { margin-left: -2px; }
.second .group:first-child .grip { margin-left: 0; }
.grip { width: 5px; height: 13px; border-right: 2px dotted #a9adb2; margin-right: 1px; flex: none; }
.far { margin-left: 146px; }
.near { margin-left: 12px; }
.tools { display: grid; grid-auto-flow: column; grid-auto-columns: 1fr; align-items: center; height: 100%; }
.tools button { height: 100%; }
.tools svg { width: 17px; height: 17px; }
.w118 { width: 118px; } .w234 { width: 234px; } .w236 { width: 236px; } .w59 { width: 59px; }
.w157 { width: 157px; } .w19 { width: 19px; } .w39 { width: 39px; } .w78 { width: 79px; }
.drop svg { width: 10px; height: 18px; }
.on { background: #bcdcf4; }

.pick { display: flex; align-items: center; background: #fff; border: 1px solid #9b9b9b; height: 17px; }
.chev { width: 9px; height: 13px; border-left: 1px solid #ccc; flex: none; }
.chev path { fill: none; stroke: #777; stroke-width: 1; }
.colors { width: 100px; border-color: #ddd; margin-right: 2px; }
.filter { width: 80px; background: #a9cdec; border-color: #a9cdec; }
.filter .chev { background: #eef3f8; }

.main { flex: 1; display: flex; min-height: 0; }
.side { width: 184px; flex: none; display: flex; flex-direction: column; background: #f7f7f8; }
.tabs { display: flex; align-items: flex-end; height: 24px; padding-bottom: 1px; gap: 1px; }
.tabs button { padding: 0 6px; height: 17px; background: #efefef; }
.tabs .cur { background: #fcfcfc; height: 18px; padding: 0 7px 0 5px; }
.dbrow { display: flex; align-items: center; height: 24px; padding: 0 1px; background: #fbfbfb; }
.db { width: 109px; flex: none; }
.dbicon { width: 12px; height: 12px; margin-left: 1px; }
.dbtools { flex: 1; display: flex; justify-content: space-around; }
.dbtools svg { width: 13px; height: 13px; }
.tree { flex: 1; min-height: 0; border: 1px solid #aab4b8; margin: 0 1px 0 1px; background: #fff; display: flex; flex-direction: column; }
.treebody { flex: 1; min-height: 0; display: flex; }
.tree ul { flex: 1; min-width: 0; list-style: none; display: flex; flex-direction: column; overflow: hidden; margin-left: -1px; }
.tree li { flex: 1; display: flex; align-items: center; white-space: nowrap; line-height: 12px; min-height: 14px; padding-bottom: 1px; }
.slot { width: 13px; flex: none; align-self: stretch; display: flex; align-items: center; justify-content: center; }
.line { background: linear-gradient(#dfe3e6, #dfe3e6) 6px 0 / 1px 100% no-repeat; }
.exp { width: 7px; height: 7px; border: 1px solid #a8a8a8; background: #fff; font: 8px/5px "Liberation Sans", sans-serif; text-align: center; color: #444; }
.ti { width: 12px; height: 12px; flex: none; margin-right: 3px; }
.under { box-shadow: 0 1px 0 #111; line-height: 12px; }
.vscroll { width: 12px; background: #f2f2f2; flex: none; padding: 11px 0 0 5px; }
.vscroll span { display: block; width: 2px; height: 62%; background: #7d7d7d; }
.hscroll { height: 12px; background: #f2f2f2; display: flex; align-items: center; padding-left: 12px; flex: none; }
.hscroll span { width: 73%; height: 2px; background: #8a8a8a; }

.work { flex: 1; min-width: 0; display: flex; flex-direction: column; }
.context { height: 24px; display: flex; align-items: center; gap: 10px; padding-left: 9px; background: #f5f5f6; }
.field { display: flex; align-items: center; gap: 4px; }
.field .pick { border-width: 1px; border-color: #8b8b8b; height: 18px; }
.spin { width: 7px; height: 14px; flex: none; }
.spin path { fill: #888; }
.spin path:first-child { fill: #f1f1f1; }
.spin .hot { fill: #111; }
.module { width: 81px; } .model { width: 81px; } .step { width: 67px; }
.stage { flex: 1; display: flex; min-height: 0; }
.toolbox { width: 49px; flex: none; padding: 1px 2px 0 5px; background: #f4f4f6; display: flex; flex-direction: column; gap: 2px; }
.set { display: grid; grid-template-columns: 1fr 1fr; grid-auto-rows: 22px; border-bottom: 1px solid #bdbdbd; }
.set:last-child { border-bottom: 0; }
.set svg { width: 17px; height: 17px; }
.canvas { flex: 1; min-width: 0; background: #fff; border: solid #6f7378; border-width: 1px 0 0 1px; border-bottom: 1px solid #c4c4c4; overflow: hidden; }
.canvas > svg { width: 100%; height: 100%; overflow: hidden; }
.tag { font: 8px "Liberation Sans", sans-serif; fill: #b6f06a; }
.axis { font: 8px "Liberation Sans", sans-serif; fill: #9cc83c; }
.triad { font: bold 10px "Liberation Sans", sans-serif; fill: #111; }
.compass { font: 8px "Liberation Sans", sans-serif; fill: #b4bd52; }
.prompt { height: 25px; flex: none; display: flex; align-items: center; justify-content: flex-end; gap: 3px; background: #f6f6f7; overflow: hidden; color: #2a9d8c; font: italic 14px "DejaVu Sans", sans-serif; padding-top: 3px; }
.ds { width: 17px; height: 16px; }

.msg { height: 59px; flex: none; display: flex; padding: 3px 0 1px; background: #f6f6f6; }
.msgbtns { width: 28px; display: flex; flex-direction: column; align-items: center; justify-content: space-around; }
.msgbtns svg { width: 17px; height: 17px; }
.log { flex: 1; min-width: 0; display: flex; background: #fff; border: 1px solid #bfc6c6; }
.lines { flex: 1; padding: 3px 2px 0; font: 10px/10px "Liberation Mono", monospace; overflow: hidden; }
.logscroll { width: 12px; background: #f2f2f2; display: flex; align-items: flex-end; justify-content: center; padding-bottom: 13px; }
.logscroll span { width: 2px; height: 7px; background: #8a8a8a; }
.resize { width: 12px; height: 12px; align-self: flex-end; }
</style>
